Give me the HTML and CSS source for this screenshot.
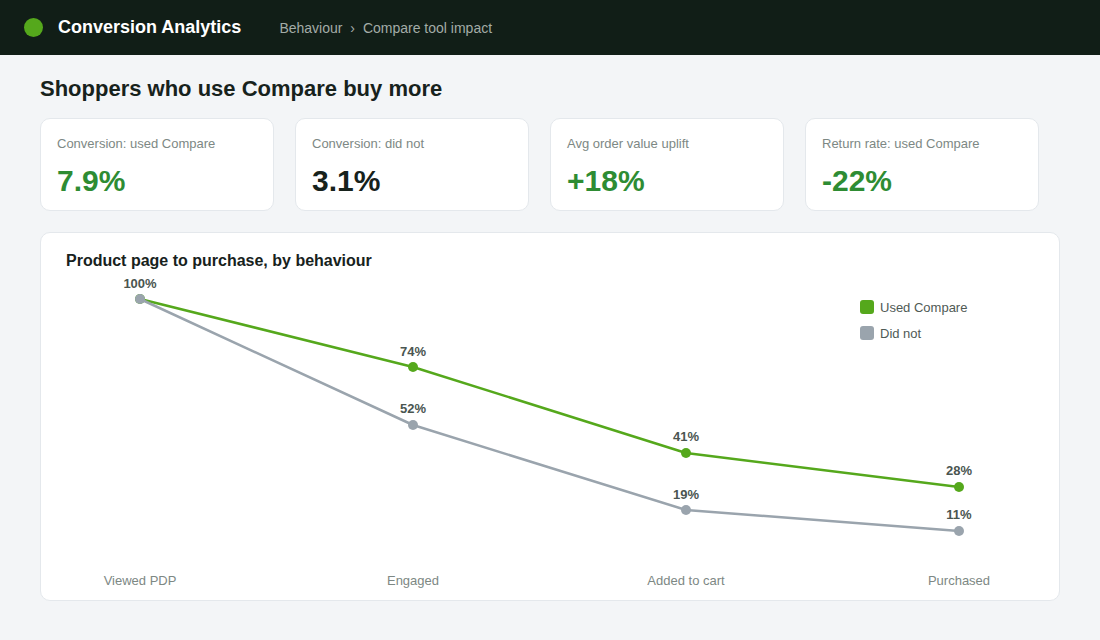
FILE: index.html
```html
<!DOCTYPE html>
<html lang="en">
<head>
    <meta charset="UTF-8">
    <meta name="viewport" content="width=device-width, initial-scale=1.0">
    <title>Compare tool impact - Conversion Analytics</title>
    <link rel="stylesheet" href="styles.css">
</head>
<body>
    <header class="topbar">
        <span class="logo-dot"></span>
        <span class="app-name">Conversion Analytics</span>
        <nav class="crumbs">
            <span>Behaviour</span>
            <span class="sep">›</span>
            <span>Compare tool impact</span>
        </nav>
    </header>

    <main class="page">
        <h1>Shoppers who use Compare buy more</h1>

        <div class="stats">
            <div class="stat">
                <div class="stat-label">Conversion: used Compare</div>
                <div class="stat-value good">7.9%</div>
            </div>
            <div class="stat">
                <div class="stat-label">Conversion: did not</div>
                <div class="stat-value">3.1%</div>
            </div>
            <div class="stat">
                <div class="stat-label">Avg order value uplift</div>
                <div class="stat-value good">+18%</div>
            </div>
            <div class="stat">
                <div class="stat-label">Return rate: used Compare</div>
                <div class="stat-value good">-22%</div>
            </div>
        </div>

        <section class="chart-card">
            <h2>Product page to purchase, by behaviour</h2>
            <svg class="funnel" viewBox="0 0 1018 329" width="1018" height="329">
                <!-- used Compare -->
                <polyline class="line-green" points="99,28 372,96 645,182 918,216"/>
                <g class="dot-green">
                    <circle cx="99" cy="28" r="5"/>
                    <circle cx="372" cy="96" r="5"/>
                    <circle cx="645" cy="182" r="5"/>
                    <circle cx="918" cy="216" r="5"/>
                </g>
                <g class="val">
                    <text x="99" y="17">100%</text>
                    <text x="372" y="85">74%</text>
                    <text x="645" y="170">41%</text>
                    <text x="918" y="204">28%</text>
                </g>

                <!-- did not -->
                <polyline class="line-grey" points="99,28 372,154 645,239 918,260"/>
                <g class="dot-grey">
                    <circle cx="99" cy="28" r="5"/>
                    <circle cx="372" cy="154" r="5"/>
                    <circle cx="645" cy="239" r="5"/>
                    <circle cx="918" cy="260" r="5"/>
                </g>
                <g class="val">
                    <text x="372" y="142">52%</text>
                    <text x="645" y="228">19%</text>
                    <text x="918" y="248">11%</text>
                </g>

                <!-- stages -->
                <g class="axis">
                    <text x="99" y="314">Viewed PDP</text>
                    <text x="372" y="314">Engaged</text>
                    <text x="645" y="314">Added to cart</text>
                    <text x="918" y="314">Purchased</text>
                </g>

                <!-- legend -->
                <g class="legend">
                    <rect x="819" y="29" width="14" height="14" rx="3" fill="#55a81c"/>
                    <text x="839" y="41">Used Compare</text>
                    <rect x="819" y="55" width="14" height="14" rx="3" fill="#9aa4ad"/>
                    <text x="839" y="67">Did not</text>
                </g>
            </svg>
        </section>
    </main>
</body>
</html>
```

FILE: styles.css
```css
body {
    margin: 0;
    font-family: "Liberation Sans", Arial, sans-serif;
    background: #f3f5f7;
    color: #17221c;
}
.topbar {
    height: 55px;
    display: flex;
    align-items: center;
    padding: 0 24px;
    background: #111e17;
}
.logo-dot {
    width: 19px;
    height: 19px;
    border-radius: 50%;
    background: #55a81c;
}
.app-name {
    margin-left: 15px;
    color: #fff;
    font-size: 18px;
    font-weight: bold;
}
.crumbs {
    margin-left: 38px;
    color: #a3aca7;
    font-size: 14px;
}
.crumbs .sep {
    margin: 0 4px;
}
.page {
    padding: 20px 40px 0;
}
h1 {
    margin: 0;
    font-size: 22px;
    line-height: 28px;
    color: #17221c;
}
.stats {
    display: flex;
    gap: 21px;
    margin-top: 15px;
}
.stat {
    width: 200px;
    padding: 16px 16px 11px;
    background: #fff;
    border: 1px solid #e4e8ec;
    border-radius: 10px;
}
.stat-label {
    font-size: 13px;
    line-height: 18px;
    color: #7d8884;
}
.stat-value {
    margin-top: 10px;
    font-size: 30px;
    line-height: 36px;
    font-weight: bold;
    color: #17221c;
}
.stat-value.good {
    color: #2e8c33;
}
.chart-card {
    margin-top: 21px;
    width: 1018px;
    background: #fff;
    border: 1px solid #e4e8ec;
    border-radius: 10px;
}
.chart-card h2 {
    margin: 0;
    padding: 18px 25px 0;
    font-size: 16px;
    line-height: 20px;
    color: #17221c;
}
.funnel {
    display: block;
}
.line-green,
.line-grey {
    fill: none;
    stroke-width: 2.5;
    stroke-linejoin: round;
}
.line-green { stroke: #55a81c; }
.line-grey { stroke: #9aa4ad; }
.dot-green { fill: #55a81c; }
.dot-grey { fill: #9aa4ad; }
.val text {
    font-size: 13px;
    font-weight: bold;
    fill: #4a5550;
    text-anchor: middle;
}
.axis text {
    font-size: 13px;
    fill: #7d8884;
    text-anchor: middle;
}
.legend text {
    font-size: 13px;
    fill: #4f5a55;
}
```
